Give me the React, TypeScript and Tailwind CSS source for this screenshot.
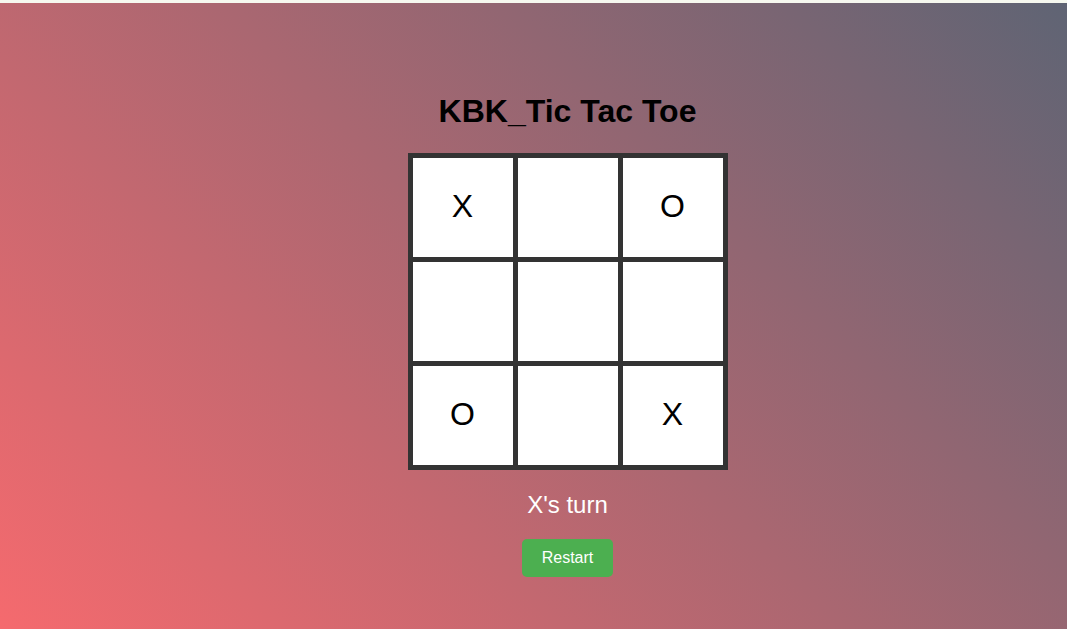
const cells = ['X', '', 'O', '', '', '', 'O', '', 'X'];

export default function App() {
  return (
    <div className="font-['Liberation_Sans',Arial,sans-serif]">
      <div className="h-[3px] bg-[#f6f8ef]" />
      <div className="h-[626px] pl-[68px] flex flex-col items-center bg-[linear-gradient(45deg,#f56a6e,#5f6474)]">
        <h1 className="mt-[90px] text-[32px] leading-[37px] font-bold text-black">KBK_Tic Tac Toe</h1>
        <div className="mt-[23px] grid grid-cols-[repeat(3,100px)] grid-rows-[repeat(3,99px)] gap-[5px] p-[5px] bg-[#333333]">
          {cells.map((c, i) => (
            <div key={i} className="bg-white flex items-center justify-center pb-[4px] text-[32px] text-black">
              {c}
            </div>
          ))}
        </div>
        <div className="mt-[21px] text-[24px] leading-[28px] text-white">X's turn</div>
        <button className="mt-[20px] px-5 py-[10px] text-[16px] leading-[18px] text-white bg-[#4caf50] rounded-[5px]">
          Restart
        </button>
      </div>
    </div>
  );
}
